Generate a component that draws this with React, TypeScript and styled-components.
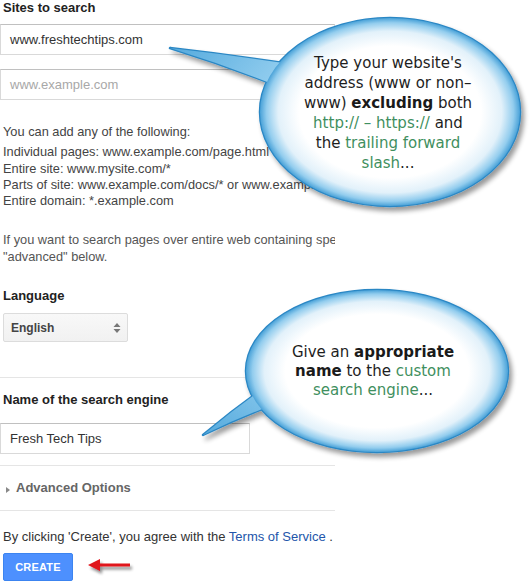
import React from "react";
import styled, { createGlobalStyle } from "styled-components";

const Global = createGlobalStyle`
  html, body { margin: 0; padding: 0; background: #fff; }
  body { font-family: "Liberation Sans", Arial, sans-serif; }
`;

const Page = styled.div`
  position: relative;
  width: 530px;
  height: 583px;
  overflow: hidden;
  background: #fff;
`;

const Column = styled.div`
  width: 335px;
  overflow: hidden;
  display: flex;
  flex-direction: column;
`;

const Heading = styled.div<{ $mt?: number }>`
  margin-top: ${(p) => p.$mt ?? 0}px;
  padding-left: 3px;
  font-size: 13px;
  line-height: 16px;
  font-weight: bold;
  color: #222;
  white-space: nowrap;
`;

const TextInput = styled.div<{ $mt: number; $w?: number; $placeholder?: boolean }>`
  margin-top: ${(p) => p.$mt}px;
  box-sizing: border-box;
  width: ${(p) => (p.$w ? `${p.$w}px` : "100%")};
  height: 31px;
  border: 1px solid #d9d9d9;
  border-top-color: #c0c0c0;
  padding: 0 9px;
  display: flex;
  align-items: center;
  font-size: 13px;
  color: ${(p) => (p.$placeholder ? "#a8a8a8" : "#333")};
  white-space: nowrap;
`;

const Para = styled.div<{ $mt: number; $color?: string }>`
  margin-top: ${(p) => p.$mt}px;
  padding-left: 3px;
  font-size: 12.8px;
  line-height: 16.3px;
  color: ${(p) => p.$color ?? "#444"};
  white-space: nowrap;
`;

const Select = styled.div`
  margin-top: 9px;
  margin-left: 3px;
  box-sizing: border-box;
  width: 125px;
  height: 29px;
  border: 1px solid #dcdcdc;
  border-radius: 2px;
  background: linear-gradient(#f8f8f8, #f1f1f1);
  display: flex;
  align-items: center;
  justify-content: space-between;
  padding: 0 6px 0 7px;
  font-size: 12px;
  font-weight: bold;
  color: #444;
`;

const Divider = styled.div<{ $mt: number }>`
  margin-top: ${(p) => p.$mt}px;
  height: 1px;
  background: #e5e5e5;
`;

const Toggle = styled.div`
  margin-top: 14px;
  padding-left: 6px;
  display: flex;
  align-items: center;
  gap: 6px;
  font-size: 13px;
  line-height: 16px;
  font-weight: bold;
  color: #666;
`;

const Tri = styled.span`
  display: inline-block;
  margin-top: 4px;
  width: 0;
  height: 0;
  border-top: 3px solid transparent;
  border-bottom: 3px solid transparent;
  border-left: 4px solid #888;
`;

const Agree = styled.div`
  margin-top: 18px;
  padding-left: 3px;
  font-size: 13px;
  line-height: 16px;
  color: #333;
  white-space: nowrap;
`;

const Link = styled.span`
  color: #2255aa;
`;

const ButtonRow = styled.div`
  margin-top: 8px;
  padding-left: 3px;
  display: flex;
  align-items: center;
  gap: 13px;
`;

const CreateButton = styled.div`
  box-sizing: border-box;
  width: 70px;
  height: 28px;
  border: 1px solid #3c84f0;
  border-radius: 2px;
  background: #4d90fe;
  color: #fff;
  font-size: 11px;
  font-weight: bold;
  display: flex;
  align-items: center;
  justify-content: center;
  letter-spacing: 0.2px;
`;

const CalloutLayer = styled.svg`
  position: absolute;
  left: 0;
  top: 0;
  width: 530px;
  height: 583px;
  pointer-events: none;
`;

const BubbleText = styled.div<{ $left: number; $top: number; $w: number; $lh: number }>`
  position: absolute;
  left: ${(p) => p.$left}px;
  top: ${(p) => p.$top}px;
  width: ${(p) => p.$w}px;
  text-align: center;
  font-family: "DejaVu Sans", "Liberation Sans", sans-serif;
  font-size: 15px;
  line-height: ${(p) => p.$lh}px;
  color: #1e1e1e;
  white-space: nowrap;
`;

const Green = styled.span`
  color: #3f8f60;
`;

const Strong = styled.b`
  color: #1a1a1a;
`;

function SortArrows() {
  return (
    <svg width="8" height="12" viewBox="0 0 8 12">
      <path d="M4 1 L7.5 5 H0.5 Z" fill="#777" />
      <path d="M4 11 L7.5 7 H0.5 Z" fill="#777" />
    </svg>
  );
}

function RedArrow() {
  return (
    <svg width="50" height="20" viewBox="0 0 50 20">
      <defs>
        <filter id="arrSh" x="-20%" y="-50%" width="150%" height="200%">
          <feGaussianBlur in="SourceAlpha" stdDeviation="1.5" />
          <feOffset dx="2" dy="3" result="b" />
          <feComponentTransfer>
            <feFuncA type="linear" slope="0.45" />
          </feComponentTransfer>
          <feMerge>
            <feMergeNode />
            <feMergeNode in="SourceGraphic" />
          </feMerge>
        </filter>
      </defs>
      <path
        d="M2 8 L14 2 L14 6.5 L44 6.5 L44 9.5 L14 9.5 L14 14 Z"
        fill="#e0161a"
        filter="url(#arrSh)"
      />
    </svg>
  );
}

type BubbleProps = {
  cx: number;
  cy: number;
  rx: number;
  ry: number;
  tail: string;
  id: string;
};

function BubbleShape({ cx, cy, rx, ry, tail, id }: BubbleProps) {
  return (
    <g filter="url(#bubShadow)">
      <path d={tail} fill="#2b87c4" stroke="#2b87c4" strokeWidth="2.5" strokeLinejoin="round" />
      <ellipse cx={cx} cy={cy} rx={rx} ry={ry} fill="#2b87c4" stroke="#2b87c4" strokeWidth="2.5" />
      <path d={tail} fill={`url(#tail-${id})`} />
      <ellipse cx={cx} cy={cy} rx={rx} ry={ry} fill="url(#bubFill)" />
    </g>
  );
}

export default function App() {
  return (
    <>
      <Global />
      <Page>
        <Column>
          <Heading $mt={0}>Sites to search</Heading>
          <TextInput $mt={8}>www.freshtechtips.com</TextInput>
          <TextInput $mt={14} $placeholder>
            www.example.com
          </TextInput>
          <Para $mt={24}>You can add any of the following:</Para>
          <Para $mt={4}>
            Individual pages: www.example.com/page.html
            <br />
            Entire site: www.mysite.com/*
            <br />
            Parts of site: www.example.com/docs/* or www.example.com/docs/page*
            <br />
            Entire domain: *.example.com
          </Para>
          <Para $mt={23} $color="#555">
            If you want to search pages over entire web containing specific content, choose
            <br />
            "advanced" below.
          </Para>
          <Heading $mt={23}>Language</Heading>
          <Select>
            <span>English</span>
            <SortArrows />
          </Select>
          <Divider $mt={35} />
          <Heading $mt={14}>Name of the search engine</Heading>
          <TextInput $mt={15} $w={250}>
            Fresh Tech Tips
          </TextInput>
          <Divider $mt={11} />
          <Toggle>
            <Tri />
            Advanced Options
          </Toggle>
          <Divider $mt={14} />
          <Agree>
            By clicking 'Create', you agree with the <Link>Terms of Service</Link> .
          </Agree>
          <ButtonRow>
            <CreateButton>CREATE</CreateButton>
            <RedArrow />
          </ButtonRow>
        </Column>

        <CalloutLayer viewBox="0 0 530 583">
          <defs>
            <radialGradient id="bubFill" cx="50%" cy="50%" r="50%">
              <stop offset="0%" stopColor="#ffffff" />
              <stop offset="70%" stopColor="#ffffff" />
              <stop offset="86%" stopColor="#e2f1fa" />
              <stop offset="95%" stopColor="#93cdee" />
              <stop offset="100%" stopColor="#4aa2d8" />
            </radialGradient>
            <linearGradient id="tail-a" x1="0" y1="0" x2="1" y2="0.3">
              <stop offset="0%" stopColor="#55aadd" />
              <stop offset="100%" stopColor="#9ad2f1" />
            </linearGradient>
            <linearGradient id="tail-b" x1="0" y1="1" x2="1" y2="0">
              <stop offset="0%" stopColor="#55aadd" />
              <stop offset="100%" stopColor="#9ad2f1" />
            </linearGradient>
            <filter id="bubShadow" x="-10%" y="-10%" width="125%" height="130%">
              <feGaussianBlur in="SourceAlpha" stdDeviation="2.5" />
              <feOffset dx="3" dy="4" />
              <feComponentTransfer>
                <feFuncA type="linear" slope="0.4" />
              </feComponentTransfer>
              <feMerge>
                <feMergeNode />
                <feMergeNode in="SourceGraphic" />
              </feMerge>
            </filter>
          </defs>
          <BubbleShape
            id="a"
            cx={390}
            cy={112}
            rx={130}
            ry={94}
            tail="M170 48 Q240 56 310 67 L300 95 Q235 68 170 48 Z"
          />
          <BubbleShape
            id="b"
            cx={377}
            cy={371}
            rx={131}
            ry={81}
            tail="M203 435 Q245 400 290 370 L300 395 Q250 412 203 435 Z"
          />
        </CalloutLayer>

        <BubbleText $left={288} $top={53} $w={200} $lh={20}>
          Type your website's
          <br />
          address (www or non–
          <br />
          www) <Strong>excluding</Strong> both
          <br />
          <Green>http:// – https://</Green> and
          <br />
          the <Green>trailing forward</Green>
          <br />
          <Green>slash</Green>...
        </BubbleText>

        <BubbleText $left={273} $top={343} $w={200} $lh={19}>
          Give an <Strong>appropriate</Strong>
          <br />
          <Strong>name</Strong> to the <Green>custom</Green>
          <br />
          <Green>search engine</Green>...
        </BubbleText>
      </Page>
    </>
  );
}
